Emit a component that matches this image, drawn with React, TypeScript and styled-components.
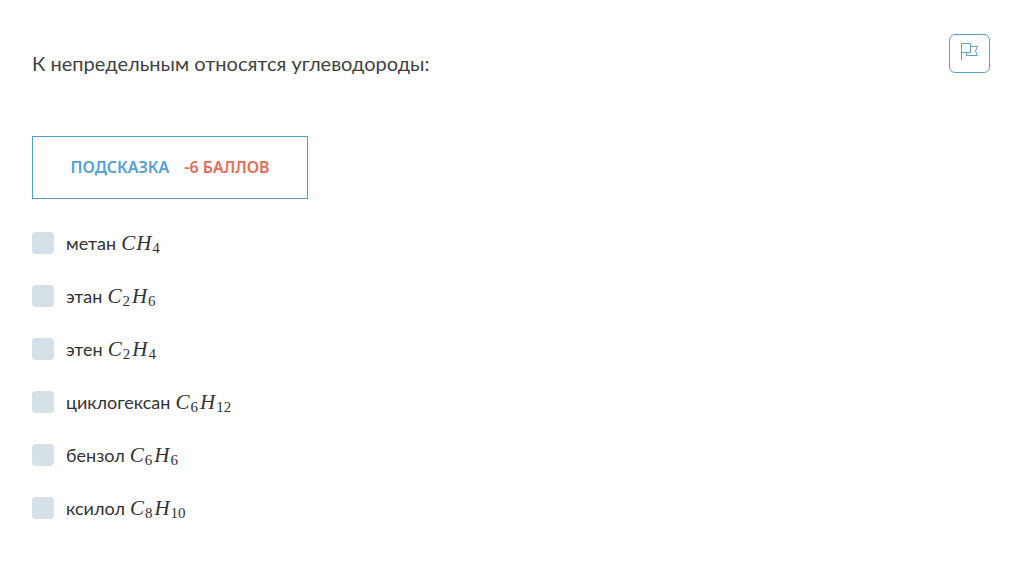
import React from "react";
import styled, { createGlobalStyle } from "styled-components";

const GlobalStyle = createGlobalStyle`
  *, *::before, *::after { box-sizing: border-box; }
  body {
    margin: 0;
    background: #fff;
    color: #333;
    font-family: Lato, "Noto Sans", sans-serif;
  }
`;

const Page = styled.main`
  padding: 34px 23px 32px 32px;
`;

const Header = styled.header`
  display: flex;
  justify-content: space-between;
  align-items: flex-start;
  gap: 24px;
`;

const Question = styled.h1`
  margin: 0;
  padding-top: 14px;
  font-size: 20px;
  font-weight: 400;
  line-height: 30px;
  color: #41423e;
`;

const FlagButton = styled.button`
  display: flex;
  justify-content: center;
  flex: none;
  width: 41px;
  height: 39px;
  padding: 7px 0 0;
  border: 1px solid #5ba3c4;
  border-radius: 6px;
  background: #fff;
  color: #5ba3c9;
  cursor: pointer;
`;

const HintButton = styled.button`
  display: flex;
  align-items: center;
  justify-content: center;
  gap: 15px;
  min-width: 276px;
  margin-top: 58px;
  padding: 20px 24px;
  border: 1px solid #559fb8;
  background: #fff;
  font-family: "Noto Sans", sans-serif;
  font-size: 16px;
  font-weight: 600;
  line-height: 21px;
  text-transform: uppercase;
  cursor: pointer;
`;

const HintLabel = styled.span`
  color: #559fd3;
`;

const HintPrice = styled.span`
  color: #e46c58;
`;

const Options = styled.fieldset`
  display: flex;
  flex-direction: column;
  align-items: flex-start;
  gap: 29px;
  margin: 32px 0 0;
  padding: 0;
  border: 0;
`;

const Option = styled.label`
  display: flex;
  align-items: center;
  gap: 12px;
  height: 24px;
  font-size: 18px;
  line-height: 24px;
  cursor: pointer;
`;

const Checkbox = styled.input`
  appearance: none;
  flex: none;
  width: 22px;
  height: 22px;
  margin: 0;
  border-radius: 4px;
  background: #d6e1e7;
  cursor: pointer;

  &:checked { background: #559fd3; }
`;

const Formula = styled.span`
  margin-left: 5px;
  font-family: "Liberation Serif", serif;
  font-size: 21px;
  line-height: 20px;
`;

const Element = styled.i`
  margin-right: 1px;
`;

const Count = styled.sub`
  margin-right: 2px;
  font-size: 15px;
  line-height: 0;
  vertical-align: -3px;
`;

type Atom = [symbol: string, count?: number];

const options: { name: string; atoms: Atom[] }[] = [
  { name: "метан", atoms: [["C"], ["H", 4]] },
  { name: "этан", atoms: [["C", 2], ["H", 6]] },
  { name: "этен", atoms: [["C", 2], ["H", 4]] },
  { name: "циклогексан", atoms: [["C", 6], ["H", 12]] },
  { name: "бензол", atoms: [["C", 6], ["H", 6]] },
  { name: "ксилол", atoms: [["C", 8], ["H", 10]] },
];

const FlagIcon = () => (
  <svg width="19" height="19" viewBox="0 0 19 19" fill="none" stroke="currentColor" aria-hidden="true">
    <path d="M1.5 18V1.5H10.5V10.5H1.5" />
    <path d="M10.5 4.5H17.5L15.5 9L17.5 13.5H6.5V10.5" />
  </svg>
);

export default function App() {
  return (
    <>
      <GlobalStyle />
      <Page>
        <Header>
          <Question id="question">К непредельным относятся углеводороды:</Question>
          <FlagButton type="button" aria-label="Отметить вопрос">
            <FlagIcon />
          </FlagButton>
        </Header>
        <HintButton type="button">
          <HintLabel>Подсказка</HintLabel>
          <HintPrice>-6 баллов</HintPrice>
        </HintButton>
        <Options aria-labelledby="question">
          {options.map(({ name, atoms }) => (
            <Option key={name}>
              <Checkbox type="checkbox" name="answer" value={name} />
              <span>
                {name}
                <Formula>
                  {atoms.map(([symbol, count]) => (
                    <React.Fragment key={symbol}>
                      <Element>{symbol}</Element>
                      {count && <Count>{count}</Count>}
                    </React.Fragment>
                  ))}
                </Formula>
              </span>
            </Option>
          ))}
        </Options>
      </Page>
    </>
  );
}
